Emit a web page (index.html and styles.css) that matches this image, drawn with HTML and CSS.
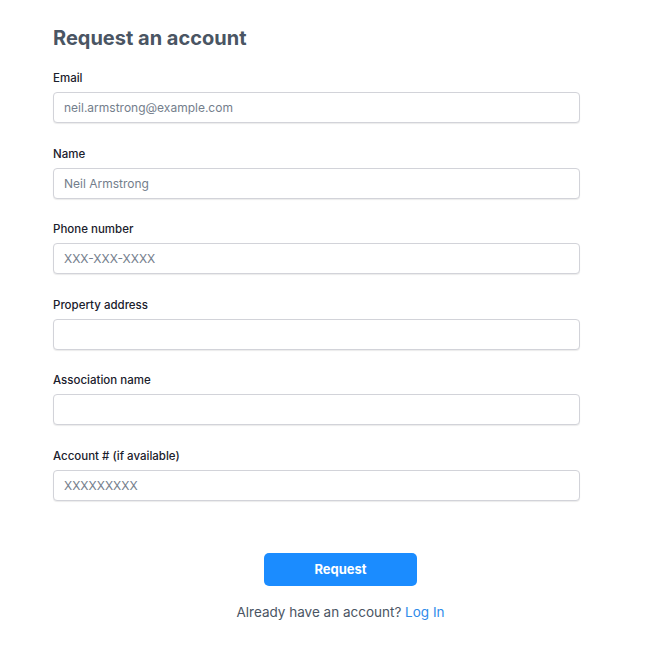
FILE: index.html
```html
<!DOCTYPE html>
<html lang="en">
<head>
<meta charset="utf-8">
<title>Request an account</title>
<link rel="stylesheet" href="styles.css">
</head>
<body>
<main class="page">
  <h1 class="title">Request an account</h1>
  <form class="form">
    <div class="field">
      <label class="label">Email</label>
      <input class="input" type="text" placeholder="neil.armstrong@example.com">
    </div>
    <div class="field">
      <label class="label">Name</label>
      <input class="input" type="text" placeholder="Neil Armstrong">
    </div>
    <div class="field">
      <label class="label">Phone number</label>
      <input class="input" type="text" placeholder="XXX-XXX-XXXX">
    </div>
    <div class="field">
      <label class="label">Property address</label>
      <input class="input" type="text">
    </div>
    <div class="field">
      <label class="label">Association name</label>
      <input class="input" type="text">
    </div>
    <div class="field">
      <label class="label">Account # (if available)</label>
      <input class="input" type="text" placeholder="XXXXXXXXX">
    </div>
    <div class="actions">
      <button class="button" type="button">Request</button>
      <p class="footer">Already have an account? <a class="link" href="#">Log In</a></p>
    </div>
  </form>
</main>
</body>
</html>
```
FILE: styles.css
```css
html, body {
  margin: 0;
  padding: 0;
  background: #ffffff;
}
body {
  font-family: Inter, "Noto Sans", sans-serif;
  color: #1a202c;
}
.page {
  padding: 26px 0 0 53px;
}
.title {
  margin: 0;
  font-size: 20px;
  line-height: 24px;
  font-weight: 700;
  color: #4a5563;
}
.form {
  margin-top: 20px;
  width: 527px;
}
.field {
  display: flex;
  flex-direction: column;
  gap: 6px;
  margin-bottom: 22.6px;
}
.label {
  font-size: 11.5px;
  line-height: 16px;
  font-weight: 500;
  color: #1a202c;
}
.input {
  box-sizing: border-box;
  height: 31px;
  width: 527px;
  border: 1px solid #d2d3d9;
  border-radius: 4px;
  box-shadow: 0 1px 1px rgba(0, 0, 0, 0.08);
  padding: 0 10px;
  font-family: inherit;
  font-size: 12px;
  color: #1a202c;
  background: #fff;
  outline: none;
}
.input::placeholder {
  color: #747e8c;
}
.actions {
  width: 575px;
  margin-top: 52px;
  display: flex;
  flex-direction: column;
  align-items: center;
}
.button {
  width: 153px;
  height: 33px;
  border: none;
  border-radius: 5px;
  background: #1b8cff;
  color: #ffffff;
  font-family: inherit;
  font-size: 13px;
  font-weight: 700;
}
.footer {
  margin: 17px 0 0;
  font-size: 13.5px;
  line-height: 18px;
  color: #4a5563;
}
.link {
  color: #2f8bea;
  text-decoration: none;
}
```
